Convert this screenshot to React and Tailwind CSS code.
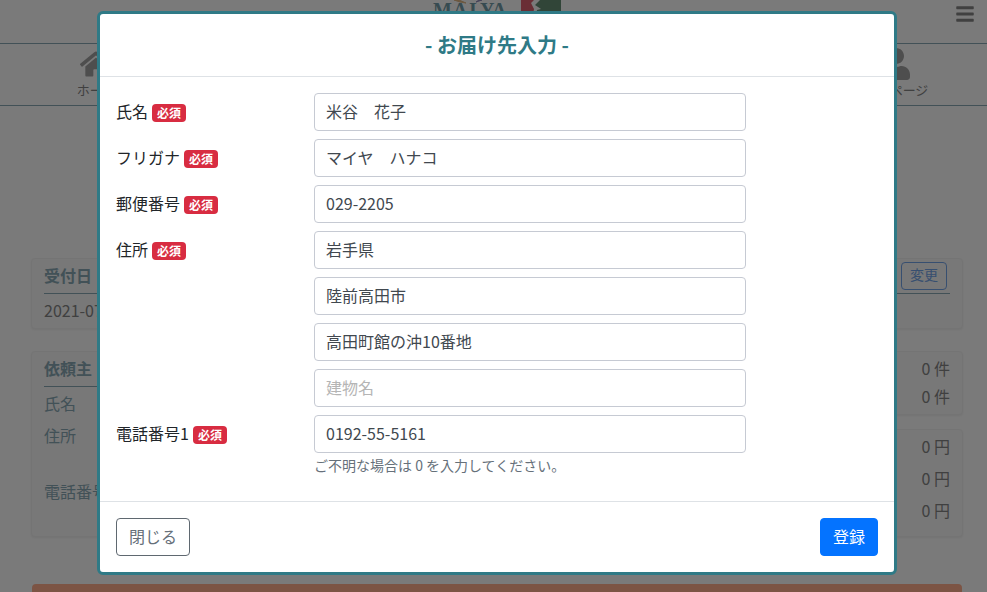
import { useState } from 'react';
import { FaBars, FaHome, FaUser } from 'react-icons/fa';

function Logo() {
  return (
    <svg width="132" height="22" viewBox="0 0 132 22" aria-label="MAIYA">
      <text
        x="2 22 38 49 61"
        y="17"
        fontFamily="Liberation Serif"
        fontWeight="bold"
        fontSize="20"
        fill="#6f97a3"
      >
        MAIYA
      </text>
      <path d="M23 0h5l7 3-6-1z" fill="#d8b080" stroke="#d8b080" />
      <path d="M45 2l3-2h3z" fill="#8c86b4" stroke="#8c86b4" />
      <path d="M90 0h13l-3 3 3 6-2 13H90z" fill="#d45c6a" />
      <path d="M109 0h21v22h-26l2-12 4-1-6-4z" fill="#628a70" />
    </svg>
  );
}

function NavItem({ href, icon, label }) {
  return (
    <a href={href} className="flex w-20 flex-col items-center text-[13px] leading-5 text-[#808080]">
      <span className="text-[#9c9c9c]">{icon}</span>
      {label}
    </a>
  );
}

function Card({ className = '', children }) {
  return (
    <section className={`rounded border border-[#e9e9e9] bg-[#f0f0f0] px-3 shadow-xs ${className}`}>
      {children}
    </section>
  );
}

function Page() {
  return (
    <div className="text-[#808080]">
      <header className="relative flex h-11 items-start justify-center border-b border-[#84a3af] pl-[7px]">
        <Logo />
        <button type="button" aria-label="メニュー" className="absolute top-1 right-3 text-[#808080]">
          <FaBars size={20} />
        </button>
      </header>

      <nav className="flex h-[62px] justify-between border-b border-[#84a3af] pt-1 pr-[51px] pl-[56px]">
        <NavItem href="#home" icon={<FaHome size={32} />} label="ホーム" />
        <NavItem href="#mypage" icon={<FaUser size={32} />} label="マイページ" />
      </nav>

      <main className="mt-[152px] pr-6 pl-[31px]">
        <Card>
          <div className="flex h-[35px] items-center justify-between border-b border-[#84a3af] pr-[3px]">
            <h2 className="pb-[2px] font-bold text-[#84a3af]">受付日</h2>
            <button
              type="button"
              className="h-7 rounded border border-[#6f9ee0] px-2 pb-1 text-sm leading-5 text-[#6f9ee0]"
            >
              変更
            </button>
          </div>
          <p className="h-[34px] leading-8">2021-07-15</p>
        </Card>

        <div className="mt-[22px] grid grid-cols-2 gap-6">
          <Card>
            <h2 className="h-[35px] border-b border-[#84a3af] leading-8 font-bold text-[#84a3af]">依頼主</h2>
            <dl className="leading-8 text-[#84a3af]">
              <dt>氏名</dt>
              <dt className="mb-6">住所</dt>
              <dt>電話番号</dt>
            </dl>
          </Card>
          <div className="flex flex-col gap-[14px] text-right">
            <Card className="pt-[2px] pb-1 leading-7">
              <p>0 件</p>
              <p>0 件</p>
            </Card>
            <Card className="pb-[10px] leading-8">
              <p>0 円</p>
              <p>0 円</p>
              <p>0 円</p>
            </Card>
          </div>
        </div>

        <div className="mx-px mt-[47px] h-12 rounded bg-[#f8a888]" />
      </main>
    </div>
  );
}

function Required() {
  return (
    <span className="mt-[3px] ml-1 rounded bg-[#d82c41] px-[5px] text-xs leading-[18px] font-bold text-white">
      必須
    </span>
  );
}

const fields = [
  { id: 'name', label: '氏名', value: '米谷　花子' },
  { id: 'kana', label: 'フリガナ', value: 'マイヤ　ハナコ' },
  { id: 'zip', label: '郵便番号', value: '029-2205' },
  { id: 'pref', label: '住所', value: '岩手県' },
  { id: 'city', hidden: '市区町村', value: '陸前高田市' },
  { id: 'street', hidden: '番地', value: '高田町館の沖10番地' },
  { id: 'building', hidden: '建物名', value: '', placeholder: '建物名' },
  { id: 'tel', label: '電話番号1', value: '0192-55-5161', help: 'ご不明な場合は 0 を入力してください。' },
];

function Field({ field, value, onChange }) {
  return (
    <div className="-mx-[15px] grid grid-cols-12">
      <div className="col-span-3 px-[15px]">
        {field.label && (
          <label htmlFor={field.id} className="flex h-9 items-center text-[#212529]">
            {field.label}
            <Required />
          </label>
        )}
      </div>
      <div className="col-span-7 px-[15px]">
        <input
          id={field.id}
          type="text"
          aria-label={field.hidden}
          value={value}
          placeholder={field.placeholder}
          onChange={(e) => onChange(field.id, e.target.value)}
          className="block h-[38px] w-full rounded border border-[#c6cad3] bg-white px-[11px] pb-[2px] text-[#41484f] placeholder:text-[#b5b5b5]"
        />
        {field.help && <p className="mt-[2px] text-sm leading-5 text-[#66707a]">{field.help}</p>}
      </div>
    </div>
  );
}

export default function App() {
  const [values, setValues] = useState(Object.fromEntries(fields.map((f) => [f.id, f.value])));

  function handleChange(id, value) {
    setValues({ ...values, [id]: value });
  }

  return (
    <div className="h-screen overflow-hidden bg-[#f4f4f4] font-['Noto_Sans_CJK_JP',sans-serif] text-base">
      <Page />

      <div className="fixed inset-0 overflow-hidden bg-black/50 pt-[11px] pl-[7px]">
        <form
          role="dialog"
          aria-labelledby="dialog-title"
          onSubmit={(e) => e.preventDefault()}
          className="mx-auto max-w-[800px] rounded-md border-3 border-[#2f7a86] bg-white"
        >
          <div className="border-b border-[#dee2e6] p-4">
            <h1 id="dialog-title" className="text-center text-xl leading-[30px] font-bold text-[#2f7a86]">
              - お届け先入力 -
            </h1>
          </div>

          <div className="flex flex-col gap-2 px-4 pt-4 pb-[26px]">
            {fields.map((f) => (
              <Field key={f.id} field={f} value={values[f.id]} onChange={handleChange} />
            ))}
          </div>

          <div className="flex justify-between border-t border-[#dee2e6] p-4">
            <button type="button" className="h-[38px] rounded border border-[#5f6870] px-3 pb-[2px] text-[#66707a]">
              閉じる
            </button>
            <button
              type="submit"
              className="h-[38px] rounded border border-[#0473ff] bg-[#0473ff] px-3 pb-[2px] text-white"
            >
              登録
            </button>
          </div>
        </form>
      </div>
    </div>
  );
}
